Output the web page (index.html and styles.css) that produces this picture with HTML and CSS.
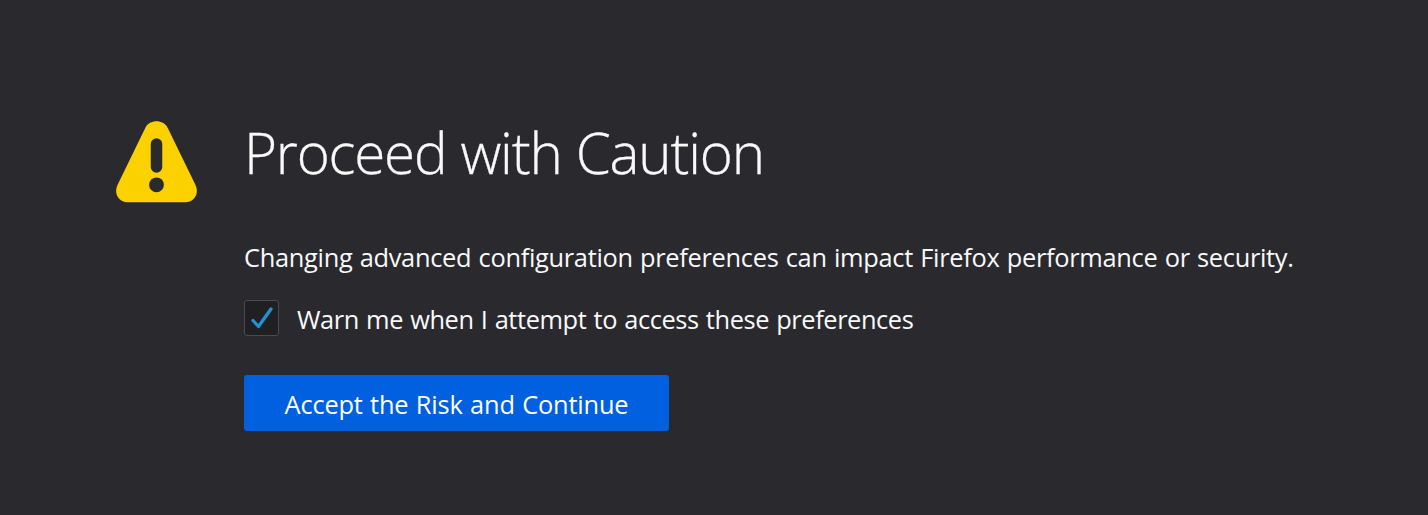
FILE: index.html
```html
<!DOCTYPE html>
<html lang="en">
<head>
<meta charset="utf-8">
<title>Advanced Preferences</title>
<link rel="stylesheet" href="styles.css">
</head>
<body>
<main class="warning">
  <svg class="warning-icon" viewBox="0 0 82 82" aria-hidden="true">
    <path fill="#fcd100" d="M30.500 6.500C34.500-1.800 48.500-1.800 52.500 6.500L80.500 64C84.500 72 79.500 81.300 70.500 81.300H12.500C3.500 81.300-1.500 72 2.500 64Z"/>
    <path stroke="#2a2a2e" stroke-width="11.500" stroke-linecap="round" d="M41.500 23V46"/>
    <circle cx="41.500" cy="63.800" r="7.400" fill="#2a2a2e"/>
  </svg>
  <div class="content">
    <h1 class="title">Proceed with Caution</h1>
    <p class="description">Changing advanced configuration preferences can impact Firefox performance or security.</p>
    <label class="option">
      <span class="checkbox"><svg viewBox="0 0 33 34"><path d="M8 19.500L13.500 25.500L26 8" fill="none" stroke="#2491d2" stroke-width="3.300" stroke-linecap="round" stroke-linejoin="round"/></svg></span>
      <span class="option-text">Warn me when I attempt to access these preferences</span>
    </label>
    <button class="accept">Accept the Risk and Continue</button>
  </div>
</main>
</body>
</html>
```
FILE: styles.css
```css
* { box-sizing: border-box; }
body { margin: 0; background: #2a2a2e; color: #f9f9fa; font-family: "Open Sans", sans-serif; font-size: 25.4px; }
.warning { display: flex; height: 515px; padding: 115px 0 0 115px; }
.warning-icon { width: 82px; height: 82px; margin-top: 6px; margin-right: 47px; flex: none; }
.content { display: flex; flex-direction: column; align-items: flex-start; }
.title { margin: 0; height: 79px; font-size: 56.500px; font-weight: 300; line-height: 76px; letter-spacing: -1.2px; word-spacing: 0.7px; white-space: nowrap; -webkit-text-stroke: 0.3px #f9f9fa; }
.description { margin: 45px 0 0; line-height: 36px; letter-spacing: -0.3px; word-spacing: 1px; white-space: nowrap; }
.option { display: flex; align-items: center; margin-top: 25px; height: 36px; gap: 18px; white-space: nowrap; }
.option-text { padding-top: 2px; letter-spacing: -0.41px; word-spacing: 1px; }
.checkbox { width: 35px; height: 36px; border: 1px solid #4a4a4f; border-radius: 3px; background: #202023; }
.checkbox svg { display: block; width: 33px; height: 34px; }
.accept { width: 425px; height: 56px; margin-top: 39px; padding: 2px 0 0; border: 0; border-radius: 3px; background: #0060df; color: #fff; font: inherit; letter-spacing: -0.18px; word-spacing: 1px; }
```
